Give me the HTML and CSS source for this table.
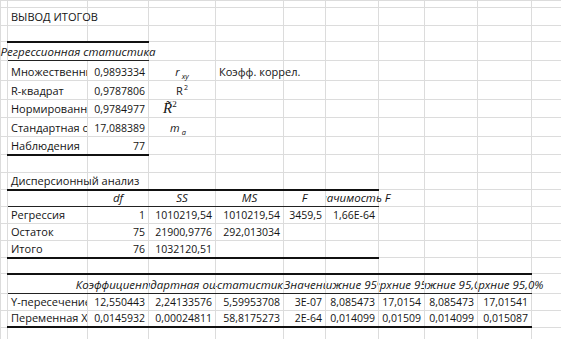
FILE: index.html
```html
<!DOCTYPE html>
<html lang="ru">
<head>
<meta charset="utf-8">
<title>Вывод итогов</title>
<link rel="stylesheet" href="styles.css">
</head>
<body>
<table class="sheet">
<colgroup>
<col class="w0"><col class="wa"><col class="wb"><col class="wc"><col class="wd"><col class="we"><col class="wf"><col class="wg"><col class="wh"><col class="wi"><col class="wj">
</colgroup>
<tbody>
<tr class="h7"><td></td><td></td><td></td><td></td><td></td><td></td><td></td><td></td><td></td><td></td><td></td></tr>
<tr class="h18"><td></td><td class="tx">ВЫВОД ИТОГОВ</td><td></td><td></td><td></td><td></td><td></td><td></td><td></td><td></td><td></td></tr>
<tr class="h16"><td></td><td class="bb"></td><td class="bb"></td><td></td><td></td><td></td><td></td><td></td><td></td><td></td><td></td></tr>
<tr class="h19"><td></td><td colspan="2" class="bt"><div class="cen it">Регрессионная статистика</div></td><td></td><td></td><td></td><td></td><td></td><td></td><td></td><td></td></tr>
<tr class="h20"><td></td><td class="tx clip">Множественный R</td><td class="nm">0,9893334</td><td class="eqc"><span class="eq-r">r</span><span class="eq-sub">xy</span></td><td class="tx">Коэфф. коррел.</td><td></td><td></td><td></td><td></td><td></td><td></td></tr>
<tr class="h19"><td></td><td class="tx clip">R-квадрат</td><td class="nm">0,9787806</td><td class="eqc">R<span class="eq-sup">2</span></td><td></td><td></td><td></td><td></td><td></td><td></td><td></td></tr>
<tr class="h18"><td></td><td class="tx clip">Нормированный R-квадрат</td><td class="nm">0,9784977</td><td class="eqc eq-left"><span class="eq-rbar">R&#771;</span><span class="eq-sup2">2</span></td><td></td><td></td><td></td><td></td><td></td><td></td><td></td></tr>
<tr class="h19"><td></td><td class="tx clip">Стандартная ошибка</td><td class="nm">17,088389</td><td class="eqc eq-mid"><span class="eq-r">m</span><span class="eq-sub">a</span></td><td></td><td></td><td></td><td></td><td></td><td></td><td></td></tr>
<tr class="h18"><td></td><td class="tx clip bb">Наблюдения</td><td class="nm bb">77</td><td></td><td></td><td></td><td></td><td></td><td></td><td></td><td></td></tr>
<tr class="h18"><td></td><td></td><td></td><td></td><td></td><td></td><td></td><td></td><td></td><td></td><td></td></tr>
<tr class="h17"><td></td><td class="tx bb">Дисперсионный анализ</td><td class="bb"></td><td class="bb"></td><td class="bb"></td><td class="bb"></td><td class="bb"></td><td></td><td></td><td></td><td></td></tr>
<tr class="h17"><td></td><td class="bt"></td><td class="bt"><div class="cen it">df</div></td><td class="bt"><div class="cen it">SS</div></td><td class="bt"><div class="cen it">MS</div></td><td class="bt"><div class="cen it">F</div></td><td class="bt"><div class="cen it cut-l">Значимость F</div></td><td></td><td></td><td></td><td></td></tr>
<tr class="h17"><td></td><td class="tx clip">Регрессия</td><td class="nm">1</td><td class="nm">1010219,54</td><td class="nm">1010219,54</td><td class="nm">3459,5</td><td class="nm">1,66E-64</td><td></td><td></td><td></td><td></td></tr>
<tr class="h17"><td></td><td class="tx clip">Остаток</td><td class="nm">75</td><td class="nm">21900,9776</td><td class="nm">292,013034</td><td></td><td></td><td></td><td></td><td></td><td></td></tr>
<tr class="h17"><td></td><td class="tx clip bb">Итого</td><td class="nm bb">76</td><td class="nm bb">1032120,51</td><td class="bb"></td><td class="bb"></td><td class="bb"></td><td></td><td></td><td></td><td></td></tr>
<tr class="h16"><td></td><td class="bb"></td><td class="bb"></td><td class="bb"></td><td class="bb"></td><td class="bb"></td><td class="bb"></td><td class="bb"></td><td class="bb"></td><td class="bb"></td><td></td></tr>
<tr class="h20"><td></td><td class="bt"></td><td class="bt"><div class="cen it cut-r">Коэффициенты</div></td><td class="bt"><div class="cen it cut">Стандартная ошибка</div></td><td class="bt"><div class="cen it cut">t-статистика</div></td><td class="bt"><div class="cen it cut">P-Значение</div></td><td class="bt"><div class="cen it cut">Нижние 95%</div></td><td class="bt"><div class="cen it cut">Верхние 95%</div></td><td class="bt"><div class="cen it cut">Нижние 95,0%</div></td><td class="bt"><div class="cen it cut-l">Верхние 95,0%</div></td><td></td></tr>
<tr class="h17"><td></td><td class="tx clip">Y-пересечение</td><td class="nm">12,550443</td><td class="nm">2,24133576</td><td class="nm">5,59953708</td><td class="nm">3E-07</td><td class="nm">8,085473</td><td class="nm">17,0154</td><td class="nm">8,085473</td><td class="nm">17,01541</td><td></td></tr>
<tr class="h16"><td></td><td class="tx clip bb">Переменная X</td><td class="nm bb">0,0145932</td><td class="nm bb">0,00024811</td><td class="nm bb">58,8175273</td><td class="nm bb">2E-64</td><td class="nm bb">0,014099</td><td class="nm bb">0,01509</td><td class="nm bb">0,014099</td><td class="nm bb">0,015087</td><td></td></tr>
<tr class="h20"><td></td><td></td><td></td><td></td><td></td><td></td><td></td><td></td><td></td><td></td><td></td></tr>
</tbody>
</table>
</body>
</html>
```

FILE: styles.css
```css
html, body {
  margin: 0;
  padding: 0;
  background: #ffffff;
  overflow: hidden;
}

.sheet {
  border-collapse: collapse;
  table-layout: fixed;
  width: 562px;
  font-family: "Open Sans", "Noto Sans", "DejaVu Sans", sans-serif;
  font-size: 10.5px;
  color: #141414;
}

.w0 { width: 7px; }
.wa { width: 80px; }
.wb { width: 61px; }
.wc { width: 67px; }
.wd { width: 68px; }
.we { width: 42px; }
.wf { width: 53px; }
.wg { width: 46px; }
.wh { width: 53px; }
.wi { width: 54px; }
.wj { width: 31px; }

.sheet td {
  border: 1px solid #dcdcdc;
  padding: 0 0 1px 0;
  vertical-align: bottom;
  white-space: nowrap;
  line-height: 14px;
  height: auto;
}

.h7 { height: 7px; }
.h15 { height: 15px; }
.h16 { height: 16px; }
.h17 { height: 17px; }
.h18 { height: 18px; }
.h19 { height: 19px; }
.h20 { height: 20px; }

.sheet td.bb { border-bottom: 2px solid #111; }
.sheet td.bt { border-bottom: 1px solid #222; }

.tx { padding-left: 3px !important; text-align: left; font-size: 11px; }
.clip { overflow: hidden; }
.nm { text-align: right; padding-right: 3px !important; }

.cen {
  display: flex;
  justify-content: center;
  white-space: nowrap;
}
.it { font-style: italic; font-size: 11.5px; }
.cut { clip-path: inset(0 0 0 0); }
.cut-r { clip-path: inset(0 0 0 -80px); }
.cut-l { clip-path: inset(0 -80px 0 0); }

.eqc {
  text-align: center;
  font-size: 11px;
}
.eq-left { text-align: left; padding-left: 14px !important; }
.eq-mid { padding-right: 8px !important; }

.eq-r { font-style: italic; }
.eq-sub {
  font-style: italic;
  font-size: 7.5px;
  line-height: 0;
  vertical-align: -3px;
  margin-left: 2px;
}
.eq-sup {
  font-size: 7px;
  line-height: 0;
  vertical-align: 5px;
  margin-left: 1px;
}
.eq-rbar {
  font-family: "Liberation Serif", "DejaVu Serif", serif;
  font-style: italic;
  font-size: 15px;
  line-height: 12px;
}
.eq-sup2 {
  font-family: "Liberation Serif", "DejaVu Serif", serif;
  font-size: 9px;
  line-height: 0;
  vertical-align: 6px;
}
```
